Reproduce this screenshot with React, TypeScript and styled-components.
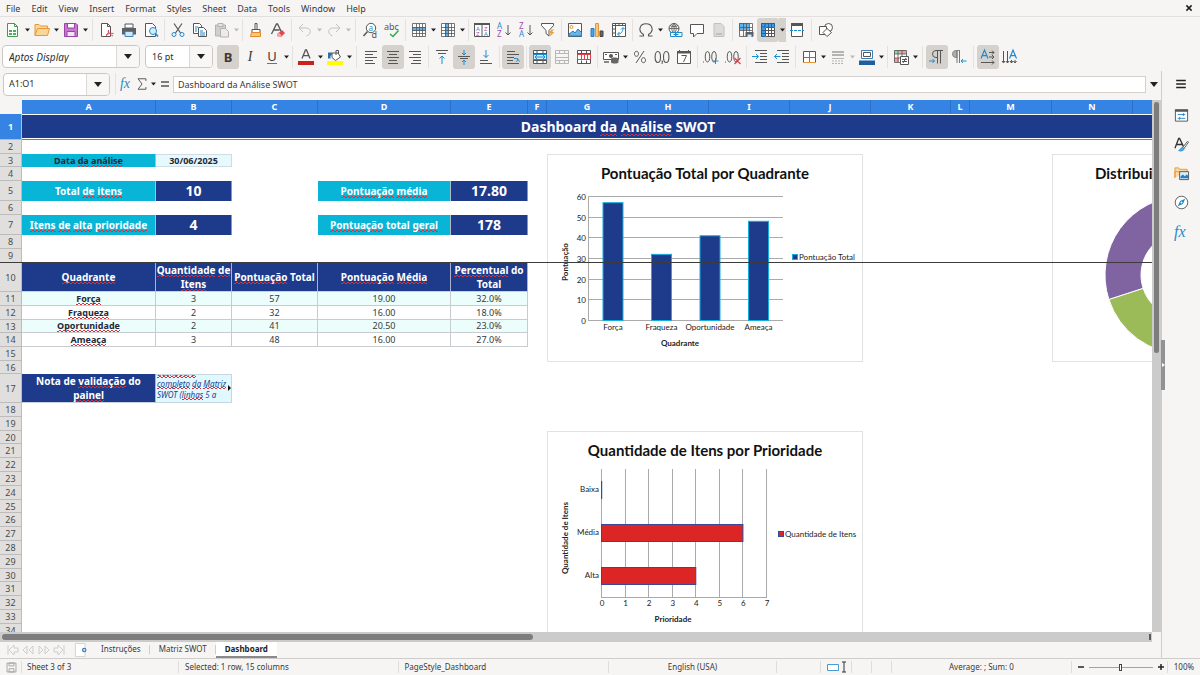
import React, { ReactNode } from "react";
import styled, { createGlobalStyle, css } from "styled-components";

const INK = "#565656";
const BLUE = "#1e8bcd";
const NAVY = "#1e3a8a";
const BAR = "#f6f5f4";

const GlobalStyle = createGlobalStyle`
  *, *::before, *::after { box-sizing: border-box; }
  html, body { margin: 0; padding: 0; }
  body { background: ${BAR}; color: #3a3a3a; font-family: "Noto Sans", sans-serif; font-size: 9px; line-height: 12px; }
  button, input, select { font: inherit; color: inherit; margin: 0; padding: 0; border: 0; background: none; }
`;

/* ---------- icons ---------- */

const lines = (d: string, c = INK, w = 1) => <path d={d} stroke={c} strokeWidth={w} fill="none" />;
const letter = (x: number, y: number, t: string, c: string, size = 8) => (
  <text x={x} y={y} fill={c} fontSize={size} fontFamily="Noto Sans, sans-serif">{t}</text>
);

const icons: Record<string, ReactNode> = {
  newDoc: <><path d="M2.5 1.5h7l3 3v10h-10z" fill="#fff" stroke="#3f9b4f" /><path d="M9.5 1.5v3h3" fill="none" stroke="#3f9b4f" /><path d="M4 8h7v5H4z" fill="#4caf5c" /><path d="M4 10.5h7M7.5 8v5" stroke="#fff" /></>,
  open: <><path d="M1 13.5V2.5h4l1.500 1.500h7v3" fill="#fbd9a0" stroke="#e8973a" /><path d="M1 13.500l2.500-7h12l-2 7z" fill="#fcd696" stroke="#e8973a" /></>,
  save: <><path d="M1.500 1.500h11.500l1.500 1.500v11.500h-13z" fill="#c678cf" stroke="#9a45a6" /><path d="M4.500 1.500h7v4.500h-7z" fill="#fff" stroke="#9a45a6" /><path d="M4 9.500h8v5H4z" fill="#efe2f1" stroke="#9a45a6" /></>,
  pdf: <><path d="M2.500 1.500h6l3 3v10h-9z" fill="#fff" stroke={INK} /><path d="M8.500 1.500v3h3" fill="none" stroke={INK} /><path d="M7 14c2-2 3-4 2.500-6M7 13c2-1.500 5-2 7.500-1.500M9 9c1 2 3 4 5 5" stroke="#e0414d" fill="none" /></>,
  print: <><path d="M4 2h8v4H4z" fill="#fff" stroke={INK} /><path d="M1 6h14v6.500H1z" fill="#5a6066" /><path d="M4 9.500h8v5H4z" fill="#cfe6f7" stroke="#3d87bd" /></>,
  preview: <><path d="M2.500 1.500h7l3 3v10h-10z" fill="#fff" stroke={INK} /><circle cx="10" cy="9" r="3.500" fill="#d5ecfa" stroke={BLUE} /><path d="M12.500 11.500l2.500 3" stroke={BLUE} strokeWidth="1.500" /></>,
  cut: <><path d="M4 1.500l6.500 9.500M12 1.500L5.500 11" stroke={INK} strokeWidth="1.200" /><circle cx="4" cy="12.500" r="2" fill="none" stroke={BLUE} /><circle cx="12" cy="12.500" r="2" fill="none" stroke={BLUE} /></>,
  copy: <><path d="M1.500 1.500h6l2 2v8h-8z" fill="#fff" stroke={INK} /><path d="M6.500 5.500h5l3 3v6h-8z" fill="#fff" stroke={INK} /><path d="M3 5h3M3 7h2M3 9h2M8 9h3M8 11h5M8 13h5" stroke={BLUE} /></>,
  paste: <><path d="M1.500 3h10v11h-10z" fill="#d0cfcd" stroke="#b5b3b1" /><path d="M4 1.500h5v3H4z" fill="#e6e5e3" stroke="#b5b3b1" /><path d="M6.500 6.500h5l3 3v5.500h-8z" fill="#ecebea" stroke="#b5b3b1" /></>,
  brush: <><path d="M7 1.500h2v6H7z" fill="#fff" stroke={INK} /><path d="M4 7.500h8v3H4z" fill="#fff" stroke={INK} /><path d="M3.500 10.500h9v4h-10z" fill="#fbc77a" stroke="#e58a2b" /></>,
  clear: <><path d="M1.500 12L6.500 2h1l4 8M3.500 8h6" stroke={INK} fill="none" strokeWidth="1.300" /><path d="M7 12l5-4 3 3-4 4H8z" fill="#e0484f" /><path d="M7 12l2-1.500 2.500 3L10.500 15H8z" fill="#f5a5a8" /></>,
  undo: lines("M6 2L2 6l4 4M2 6h7.500c5 0 5 6.500 0 8", "#c4c2c0"),
  redo: lines("M10 2l4 4-4 4M14 6H6.500c-5 0-5 6.500 0 8", "#c4c2c0"),
  find: <><circle cx="9" cy="6" r="4.700" fill="#fff" stroke={INK} /><path d="M5.500 9.500L1.500 14" stroke={INK} strokeWidth="1.500" />{letter(6.5, 8.5, "a", BLUE, 8)}{letter(9.5, 15.5, "d", INK, 9)}</>,
  spell: <>{letter(0, 8, "abc", INK, 9)}<path d="M6 12l3 2.500 5.500-6" stroke="#35a853" strokeWidth="1.500" fill="none" /></>,
  row: <><path d="M1.500 2.500h13v11h-13z" fill="#fff" /><path d="M1 5h14v4H1z" fill="#5fb2ea" />{lines("M1.500 1.500h13v13h-13zM1.500 5.500h13M1.500 8.500h13M1.500 11.500h13M5.500 1.500v13M8.500 1.500v13M11.500 1.500v13", INK, 0.8)}</>,
  col: <><path d="M1.500 1.500h13v13h-13z" fill="#fff" /><path d="M5 1h4v14H5z" fill="#5fb2ea" />{lines("M1.500 1.500h13v13h-13zM1.500 5.500h13M1.500 8.500h13M1.500 11.500h13M5.500 1.500v13M8.500 1.500v13M11.500 1.500v13", INK, 0.8)}</>,
  sort: <><path d="M.5 1.500h15v13H.5z" fill="#fff" stroke={INK} /><path d="M0 1h16v2H0z" fill={INK} /><path d="M8 3v12" stroke={INK} />{letter(2, 8.5, "A", BLUE, 6)}{letter(2, 14, "Z", "#a24bb5", 6)}{letter(10, 8.5, "Z", "#a24bb5", 6)}{letter(10, 14, "A", BLUE, 6)}</>,
  sortAsc: <>{letter(1, 7, "A", BLUE, 8)}{letter(1, 15, "Z", "#a24bb5", 8)}{lines("M12 3v10M9.500 10.500l2.500 2.500 2.500-2.500")}</>,
  sortDesc: <>{letter(1, 7, "Z", "#a24bb5", 8)}{letter(1, 15, "A", BLUE, 8)}{lines("M12 3v10M9.500 10.500l2.500 2.500 2.500-2.500")}</>,
  filter: <><path d="M1.500 1.500h12v2L9 8.500V14l-3-2.500v-3L1.500 3.500z" fill="#fff" stroke={INK} /><path d="M11.500 7.500l-3 4h2.500L9.500 15l5-5h-2.500l2-2.500z" fill="#f0a03c" /></>,
  image: <><path d="M1.500 1.500h13v13h-13z" fill="#fff" stroke={INK} /><circle cx="4.500" cy="5" r="1.500" fill="none" stroke="#e8973a" /><path d="M2 14v-2l4-3 2 2 3-4 3.500 3.500V14z" fill="#6db4e4" stroke="#2a7fbe" /></>,
  chart: <><path d="M2 6.500h3v8H2z" fill="#4ea4dc" stroke="#2a7fbe" /><path d="M6.500 1.500h3v13h-3z" fill="#fbc77a" stroke="#e0973f" /><path d="M11 9h3v5.500h-3z" fill="#666" stroke="#444" /></>,
  pivot: <><path d="M1.500 1.500h13v13h-13z" fill="#fff" stroke={INK} /><path d="M1.500 3.500h13M4.500 1.500v13M8 1.500v2M11.500 1.500v2M1.500 7h3M1.500 11h3" stroke={INK} /><path d="M7 12c3 0 5-2 5-6M10 7.500L12 5.500l2 2M8.500 10l-2 2 2 2" stroke={BLUE} fill="none" /></>,
  omega: lines("M1.500 14h4v-1.500C-.5 9 1.500 1.800 8 1.800S16.500 9 10.500 12.500V14h4", INK, 1.1),
  link: <><circle cx="7" cy="6.500" r="5" fill="none" stroke={INK} /><path d="M2 6.500h10M7 1.500v10M3 3.500c2 1.500 6 1.500 8 0M7 1.500c-3 3-3 7 0 10M7 1.500c3 3 3 7 0 10" fill="none" stroke={INK} strokeWidth=".8" /><path d="M3.500 10.500h5v4h-5zM9 10.500h6v4H9zM6.500 12.500h5" fill={BAR} stroke={BLUE} /></>,
  comment: <path d="M1.500 2.500h13v9H8l-3.500 3.500V11.500h-3z" fill="#fff" stroke={INK} />,
  header: <><path d="M3 1.500h7l3 3v10H3z" fill="#dddbd9" stroke="#c2c0be" /><path d="M5 11h6v2H5z" fill="#c2c0be" /></>,
  printRange: <><path d="M1.500 1.500h13v10h-13z" fill="#fff" /><path d="M1 1h10v7H1z" fill="#5fb2ea" />{lines("M1.500 1.500h13v13h-13zM1.500 5.500h13M1.500 8.500h13M5.500 1.500v13M8.500 1.500v13M11.500 1.500v8", INK, 0.8)}<path d="M7.500 10h8v4.500h-8z" fill="#5a6066" /><path d="M9.500 12.500h4v2.500h-4z" fill="#cfe6f7" /></>,
  freeze: <><path d="M1.500 1.500h13v13h-13z" fill="#fff" /><path d="M1 1h14v4H1zM1 1h4v14H1z" fill="#3e9be0" />{lines("M5.500 5.500v9h9v-9zM5.500 8.500h9M5.500 11.500h9M8.500 5v9.500M11.500 5v9.500")}<path d="M1.500 1.500h13v3.500M1.500 1.500v13H5M5 1.500V5M8.500 1.500V5M11.500 1.500V5M1.500 5H5M1.500 8.500H5M1.500 11.500H5" stroke="#1d62a5" fill="none" /></>,
  split: <><path d="M2.500 1.500h11v13h-11z" fill="#fff" stroke={INK} /><path d="M2 1h12v3H2z" fill={INK} /><path d="M1 8.500h14" stroke={BLUE} strokeDasharray="3 1" /></>,
  shapes: <><circle cx="10.500" cy="5.500" r="4" fill="#fff" stroke={INK} /><path d="M1.500 4.500h7v8h-7z" fill="#fff" stroke={INK} /><path d="M9 6.500l4.500 4-4.500 4-4-4z" fill="#fff" stroke={INK} /></>,
  fontColor: <><path d="M4 9.500L7.500 1h1L12 9.500M5.300 6.700h5.400" stroke={INK} fill="none" strokeWidth="1.300" /><path d="M0 12h16v4H0z" fill="#c9211e" /></>,
  highlight: <><path d="M5 4l6 0 2.500 4-5 3.500L5 8.500z" fill="#fff" stroke={INK} /><path d="M9 6V1.500h2.500V5" fill="none" stroke={INK} /><path d="M1 9.500V3.500h4v2L3.500 7v2.500z" fill="#2f6fa8" /><path d="M0 12h16v4H0z" fill="#ffff00" /></>,
  alignLeft: lines("M2 2.500h12M2 5.500h8M2 8.500h12M2 11.500h8M2 14.500h10"),
  alignCenter: lines("M2 2.500h12M4 5.500h8M2 8.500h12M4 11.500h8M3 14.500h10"),
  alignRight: lines("M2 2.500h12M6 5.500h8M2 8.500h12M6 11.500h8M4 14.500h10"),
  vTop: <>{lines("M2 1.500h12M4 4.500h8")}{lines("M8 15V7M5.500 9.500L8 7l2.500 2.500", BLUE)}</>,
  vMid: <>{lines("M2 7.500h12M4 9.500h8")}{lines("M8 1v5M6 4l2 2 2-2M8 16v-5M6 13l2-2 2 2", BLUE)}</>,
  vBottom: <>{lines("M2 11.500h8M2 14.500h12")}{lines("M8 1v7.500M5.500 6L8 8.500 10.500 6", BLUE)}</>,
  wrap: <>{lines("M2 2.500h8M2 5.500h12M2 8.500h7M2 11.500h6M2 14.500h12")}{lines("M9 9.500h2c2 0 2 3 0 3M12 9l2.500 3.500", BLUE)}</>,
  merge: <><path d="M1.500 1.500h13v13h-13z" fill="#fff" />{lines("M1.500 1.500h13v13h-13zM1.500 4.500h13M1.500 11.500h13M5 1.500v3M11 1.500v3M5 11.500v3M11 11.500v3")}<path d="M1.500 5.500h13v5h-13z" fill="#d3ebfa" stroke={BLUE} /><path d="M3 8h10M5 6L3 8l2 2M11 6l2 2-2 2" fill="none" stroke={BLUE} /></>,
  mergeOff: lines("M1.500 1.500h13v13h-13zM1.500 4.500h13M1.500 8.500h13M1.500 11.500h13M5.500 1.500v3M10.500 1.500v3M5.500 11.500v3M10.500 11.500v3", "#b9b7b5"),
  unmerge: <><path d="M1.500 1.500h13v13h-13z" fill="#fff" />{lines("M1.500 1.500h13v13h-13zM1.500 4.500h13M5.500 1.500v3M10.500 1.500v3M5.500 11.500v3M10.500 11.500v3")}{lines("M1.500 5.500h13v5h-13zM5.500 5v6M8.500 5v6M11.500 5v6", "#e0414d")}</>,
  currency: <><path d="M.5 3.500h15v7H.5z" fill="#fff" stroke={INK} /><circle cx="8" cy="7" r="2" fill={INK} /><path d="M2 5.500h2M12 5.500h2" stroke={INK} /><path d="M8 10c0-2 7.500-2 7.500 0v3c0 2-7.500 2-7.500 0z" fill="#666" /><path d="M1 12h5v2H1z" fill="#888" /></>,
  percent: lines("M12 2L4 14M4.500 2.300c2.700 0 2.700 5 0 5s-2.700-5 0-5zM11.500 8.700c2.700 0 2.700 5 0 5s-2.700-5 0-5z"),
  number: <>{lines("M3.800 2.500c3.600 0 3.600 11 0 11s-3.600-11 0-11zM12.200 2.500c3.600 0 3.600 11 0 11s-3.600-11 0-11z", INK, 1.1)}<path d="M7.500 12h1l-.5 3" stroke={INK} fill="none" /></>,
  date: <><path d="M1.500 2.500h13v12h-13z" fill="#fff" stroke={INK} /><path d="M1 2h14v2.500H1z" fill={INK} /><path d="M3.500 1v2M12.500 1v2" stroke={INK} /><path d="M5.500 6.500h5L7.500 13" stroke={INK} fill="none" /></>,
  addDec: <>{lines("M0 13h1M4.500 2.500c3 0 3 10.500 0 10.500s-3-10.500 0-10.500zM11 2.500c3 0 3 10.500 0 10.500s-3-10.500 0-10.500z")}{lines("M12.500 9v6M9.500 12h6", BLUE)}</>,
  delDec: <>{lines("M0 13h1M4.500 2.500c3 0 3 10.500 0 10.500s-3-10.500 0-10.500zM11 2.500c3 0 3 10.500 0 10.500s-3-10.500 0-10.500z")}{lines("M9.500 9l6 6M15.500 9l-6 6", "#e0414d", 1.2)}</>,
  indent: <>{lines("M3 1.500h12M8 4.500h7M8 7.500h7M8 10.500h7M3 13.500h12")}{lines("M0 7.500h6M4 5l2.500 2.500L4 10", BLUE)}</>,
  outdent: <>{lines("M3 1.500h12M8 4.500h7M8 7.500h7M8 10.500h7M3 13.500h12")}{lines("M6.500 7.500h-6M3 5L.5 7.500 3 10", BLUE)}</>,
  borders: <><path d="M2.500 2.500h12v11h-12z" fill="#fff" stroke={INK} /><path d="M8.500 2.500v11M2.500 8.500h12" stroke="#777" /><path d="M2 13.500h13" stroke="#e8973a" /></>,
  lineStyle: <><path d="M2 3h12M2 6h12" stroke="#b5b3b1" strokeWidth="2" /><path d="M2 9.500h12" stroke="#b5b3b1" /><path d="M2 12h12M2 14.500h12" stroke="#b5b3b1" strokeDasharray="2 1" /></>,
  borderColor: <><path d="M2.500 1.500h11v8h-11z" fill="#fff" stroke="#3c7fb8" /><path d="M4.500 3.500h7v4h-7z" fill="#fff" stroke={INK} /><path d="M0 11.500h16V16H0z" fill="#1f5f9e" /></>,
  conditional: <><path d="M1.500 1.500h12v12h-12z" fill="#fff" /><path d="M1 1h6v4H1z" fill="#9bd6a4" /><path d="M7 1h6v4H7zM1 9h5v4H1z" fill="#f0a0a0" />{lines("M1.500 1.500h12v12h-12zM1.500 5h12M1.500 9h12M5 1.500v12M9 1.500v12", INK, 0.8)}<path d="M7.500 7.500h8v8h-8z" fill="#fff" stroke={INK} /><path d="M9 10.500h5M9 12.500h5M13 9l-3 5" stroke={INK} /></>,
  ltr: <><path d="M11.500 1.500H7a3.500 3.500 0 0 0 0 7h1M8.500 1.500v13M11.500 1.500v13M10 1.500h4" fill="none" stroke={INK} /><path d="M0 12h5.500M3.500 10l2 2-2 2" fill="none" stroke={BLUE} /></>,
  rtl: <><path d="M9 1.500H5a3.500 3.500 0 0 0 0 7h1V1.500h3" fill="#b0aeac" stroke="#888" /><path d="M6 1.500V14M8.500 1.500V14" fill="none" stroke="#777" /><path d="M15.500 12H10M12 10l-2 2 2 2" fill="none" stroke={BLUE} /></>,
  textH: <><path d="M1 9.500L4.500 1l3.500 8.500M2.300 6.700h4.400" stroke={BLUE} fill="none" strokeWidth="1.200" />{lines("M9 3.500h5M12 1.500l2 2-2 2M9 8h5M12 6l2 2-2 2M1 13.500h13M12 11.500l2 2-2 2")}</>,
  textV: <><path d="M7.500 9.500L11 1l3.500 8.500M8.800 6.700h4.400" stroke={BLUE} fill="none" strokeWidth="1.200" />{lines("M1.500 2v12M0 12l1.500 2L3 12M5.500 2v12M4 12l1.500 2L7 12M9.500 11v3M8 12l1.500 2 1.500-2M13 11v3M11.500 12l1.500 2 1.500-2")}</>,
  burger: lines("M2.500 4h11M2.500 8h11M2.500 12h11", "#222", 1.6),
  props: <><path d="M1.500 2h13v12h-13z" fill="#fff" stroke={INK} /><path d="M1 1.500h14v2.500H1z" fill={INK} /><path d="M4 7h8M4 11h8M10 5.500v3M6 9.500v3" stroke={BLUE} /></>,
  styles: <><path d="M1 12L5 1.500h1L10 10M2.500 8h6" stroke="#333" fill="none" strokeWidth="1.400" /><path d="M14.500 4.500L9 11.500l1.500 1 5-7z" fill="#fff" stroke={INK} /><path d="M5 14.500c2-.5 2-3 4-3.500l2 1.500c-1 2-3 3-6 2z" fill="#58a9df" stroke={BLUE} /></>,
  gallery: <><path d="M1 12.500V2h4l1 1.500h8v3" fill="#fbd9a0" stroke="#e8973a" /><path d="M1 12.500V6h5" fill="none" stroke="#e8973a" /><path d="M6 6h9.500v8.500H6z" fill="#d9eefb" stroke={INK} /><path d="M7 13v-2l2.500-2 2 2 2-2 1.500 1.500V13z" fill="#2a7fbe" /></>,
  navigator: <><circle cx="8" cy="8" r="6.700" fill="#fff" stroke={INK} /><path d="M12 4l-2.500 5.500L4 12l2.500-5.500z" fill={BLUE} /><circle cx="8" cy="8" r="1" fill="#fff" /></>,
  fx: <text x="1" y="12.500" fill={BLUE} fontSize="16" fontStyle="italic" fontFamily="Liberation Serif, serif">fx</text>,
  sigma: lines("M12.500 4.500V2h-9L8 8l-4.500 6h9v-2.500", INK, 1.1),
  equals: lines("M4 6h8M4 10h8", INK, 1.6),
  close: lines("M5 5l6 6M11 5l-6 6", "#222", 1.8),
  docSave: <><path d="M2.500 2.500h11v11h-11z" fill="none" stroke="#999" /><path d="M5 2.500h6V6H5zM5 9.500h6v4H5z" fill="none" stroke="#999" /></>,
  addSheet: <><path d="M.5.5h11v15H.5z" fill="#fff" stroke="#d0cecc" /><circle cx="10.500" cy="8" r="2.500" fill="#1d6bc0" /><path d="M10.500 6.500v3M9 8h3" stroke="#fff" /></>,
};

const Svg = styled.svg`display: block; flex: none; overflow: visible;`;
const Icon = ({ name, size = 16 }: { name: string; size?: number }) => (
  <Svg width={size} height={size} viewBox="0 0 16 16" aria-hidden="true">{icons[name]}</Svg>
);
const CaretShape = ({ big, muted }: { big?: boolean; muted?: boolean }) => (
  <Svg width={big ? 8 : 5} height={big ? 5 : 4} viewBox="0 0 8 5" aria-hidden="true">
    <path d="M0 0h8L4 5z" fill={muted ? "#bbb" : "#222"} />
  </Svg>
);

/* ---------- shell ---------- */

const Page = styled.div`display: flex; flex-direction: column; height: 100vh; overflow: hidden; background: ${BAR};`;

const MenuBar = styled.nav`
  display: flex; align-items: center; height: 17px; padding: 0 4px 0 1px; gap: 1px;
  border-bottom: 1px solid #e2e0de; flex: none;
`;
const MenuItem = styled.button`padding: 1px 5px 0; line-height: 15px; white-space: nowrap;`;
const CloseButton = styled.button`margin-left: auto; width: 14px; height: 14px; display: grid; place-items: center;`;

const Toolbar = styled.div`display: flex; align-items: center; height: 27px; flex: none; padding: 0 0 2px 2px;`;
const Tool = styled.button<{ $on?: boolean }>`
  width: 22px; height: 24px; flex: none; display: grid; place-items: center; border-radius: 3px;
  background: ${(p) => (p.$on ? "#d5d1cd" : "transparent")};
`;
const Caret = styled.button<{ $on?: boolean }>`
  width: 7px; height: 24px; flex: none; display: grid; place-items: center;
  background: ${(p) => (p.$on ? "#d5d1cd" : "transparent")};
`;
const Sep = styled.span<{ $wide?: boolean }>`
  width: ${(p) => (p.$wide ? 7 : 5)}px; height: 22px; flex: none; display: flex; justify-content: center;
  &::after { content: ""; width: 1px; background: #e4e2e0; }
`;
const Glyph = styled.span<{ $kind: "b" | "i" | "u" }>`
  font-size: 13px; line-height: 16px; color: #3a3a3a;
  ${(p) => p.$kind === "b" && css`font-weight: 700;`}
  ${(p) => p.$kind === "i" && css`font-style: italic; font-family: "Liberation Serif", serif; font-size: 14px;`}
  ${(p) => p.$kind === "u" && css`border-bottom: 1px solid ${BLUE}; line-height: 14px;`}
`;

const Combo = styled.span<{ $w: number; $gap: number }>`
  display: flex; width: ${(p) => p.$w}px; height: 23px; margin-right: ${(p) => p.$gap}px; flex: none; position: relative;
  background: #fff; border: 1px solid #cdc7c2; border-radius: 4px; overflow: hidden;
`;
const ComboSelect = styled.select<{ $italic?: boolean }>`
  appearance: none; flex: 1; min-width: 0; padding-left: 6px; outline: 0; color: #2e2e2e;
  font-size: ${(p) => (p.$italic ? 10 : 9)}px;
  font-style: ${(p) => (p.$italic ? "italic" : "normal")};
`;
const ComboInput = styled.input`flex: 1; min-width: 0; padding-left: 5px; outline: 0; color: #2e2e2e;`;
const ComboArrow = styled.span`
  width: 23px; display: grid; place-items: center; background: #f8f7f6; border-left: 1px solid #dcd8d5; pointer-events: none;
`;

type ToolSpec = string | { n: string; on?: boolean; caret?: boolean; muted?: boolean; label?: ReactNode };
const Tools = ({ items }: { items: ToolSpec[] }) => (
  <>
    {items.map((it, i) => {
      if (it === "|") return <Sep key={i} />;
      if (it === "||") return <Sep key={i} $wide />;
      const t = typeof it === "string" ? { n: it } : it;
      const { n, on, caret, muted, label } = t as Exclude<ToolSpec, string>;
      return (
        <React.Fragment key={i}>
          <Tool $on={on} aria-label={n} aria-pressed={on}>{label ?? <Icon name={n} />}</Tool>
          {caret && <Caret $on={on} aria-label={`${n} options`}><CaretShape muted={muted} /></Caret>}
        </React.Fragment>
      );
    })}
  </>
);

const standardTools: ToolSpec[] = [
  { n: "newDoc", caret: true }, { n: "open", caret: true }, { n: "save", caret: true }, "||",
  "pdf", "print", "preview", "|",
  "cut", "copy", { n: "paste", caret: true, muted: true }, "|",
  "brush", "clear", "|",
  { n: "undo", caret: true, muted: true }, { n: "redo", caret: true, muted: true }, "||",
  "find", "spell", "|",
  { n: "row", caret: true }, { n: "col", caret: true }, "|",
  "sort", "sortAsc", "sortDesc", "filter", "|",
  "image", "chart", "pivot", "|",
  { n: "omega", caret: true }, "link", "comment", "header", "|",
  "printRange", { n: "freeze", on: true, caret: true }, "split", "||", "shapes",
];
const formatTools: ToolSpec[] = [
  { n: "bold", on: true, label: <Glyph $kind="b">B</Glyph> },
  { n: "italic", label: <Glyph $kind="i">I</Glyph> },
  { n: "underline", caret: true, label: <Glyph $kind="u">U</Glyph> }, "|",
  { n: "fontColor", caret: true }, { n: "highlight", caret: true }, "||",
  "alignLeft", { n: "alignCenter", on: true }, "alignRight", "|",
  "vTop", { n: "vMid", on: true }, "vBottom", "|",
  { n: "wrap", on: true }, "|",
  { n: "merge", on: true }, "mergeOff", "unmerge", "|",
  { n: "currency", caret: true }, "percent", "number", "date", "|",
  "addDec", "delDec", "|", "indent", "outdent", "|",
  { n: "borders", caret: true }, { n: "lineStyle", caret: true, muted: true }, { n: "borderColor", caret: true }, "|",
  { n: "conditional", caret: true }, "||",
  { n: "ltr", on: true }, "rtl", "||", { n: "textH", on: true }, "textV",
];

const Body = styled.div`display: flex; flex: 1; min-height: 0;`;
const Main = styled.main`display: flex; flex-direction: column; flex: 1; min-width: 0; border-right: 1px solid #cfcdcb;`;
const FormulaBar = styled.div`display: flex; align-items: center; height: 26px; margin-bottom: 3px; padding-left: 3px; flex: none;`;
const SmallTool = styled.button`width: 16px; height: 22px; flex: none; display: grid; place-items: center;`;
const FormulaInput = styled.input`
  flex: 1; min-width: 0; height: 17px; padding: 0 4px; background: #fff; border: 1px solid #d4d0cd; outline: 0;
`;
const ExpandButton = styled.button`width: 15px; height: 17px; display: grid; place-items: center; flex: none;`;

const Sidebar = styled.aside`
  width: 38px; flex: none; display: flex; flex-direction: column; align-items: center; position: relative;
`;
const SideButton = styled.button<{ $first?: boolean }>`
  width: 28px; height: ${(p) => (p.$first ? 26 : 29)}px; margin-bottom: ${(p) => (p.$first ? 4 : 0)}px;
  display: grid; place-items: center;
`;
const SideHandle = styled.button`
  position: absolute; left: -1px; top: 50%; transform: translateY(-50%); width: 4px; height: 50px;
  background: #929292; display: grid; place-items: center;
`;

/* ---------- sheet ---------- */

const SheetRow = styled.div`display: flex; flex: 1; min-height: 0;`;
const SheetView = styled.div`position: relative; flex: 1; min-width: 0; overflow: hidden; background: #fff;`;
const Grid = styled.table`
  table-layout: fixed; border-collapse: separate; border-spacing: 0; width: 1214px; line-height: 12px;
`;
const ColHead = styled.th`
  height: 14px; padding: 0; background: #3584e4; color: #fff; border-right: 1px solid #2a70c8; font-weight: 700; line-height: 12px;
`;
const Corner = styled.th`padding: 0; background: ${BAR};`;
const Tr = styled.tr<{ $h: number }>`height: ${(p) => p.$h}px;`;
const RowHead = styled.th<{ $on?: boolean }>`
  padding: 0; font-weight: ${(p) => (p.$on ? 700 : 400)}; color: ${(p) => (p.$on ? "#fff" : "#4a4a4a")};
  background: ${(p) => (p.$on ? "#3584e4" : "#e1dfdd")};
  border-right: 1px solid #bebcba; border-bottom: 1px solid #bebcba; line-height: 11px;
`;

type Kind = "blank" | "title" | "label" | "labelDark" | "date" | "kpi" | "head" | "name" | "value" | "note";
const kinds: Record<Kind, ReturnType<typeof css>> = {
  blank: css``,
  title: css`background: ${NAVY}; color: #fff; font-weight: 700; font-size: 14px; line-height: 18px; border-top: 1px solid #fff; border-bottom: 1px solid #77758a; box-shadow: inset 0 -1px #fff;`,
  label: css`background: #08b5d6; color: #fff; font-weight: 700; font-size: 10px; border-right: 1px solid #a9bfca;`,
  labelDark: css`background: #08b5d6; color: #1f2937; font-weight: 700; border-right: 1px solid #a9bfca;`,
  date: css`background: #e6f9fe; color: #1f2937; font-weight: 700; line-height: 11px; border: solid #cfdde2; border-width: 1px 1px 1px 0;`,
  kpi: css`background: ${NAVY}; color: #fff; font-weight: 700; font-size: 14px; line-height: 16px; border-right: 1px solid #8796bd;`,
  head: css`background: ${NAVY}; color: #fff; font-weight: 700; font-size: 10px; line-height: 14px; border-right: 1px solid #a9b3cf; border-bottom: 1px solid #c9d2da;`,
  name: css`color: #1f2937; font-weight: 700; border: solid #c8cccf; border-width: 0 1px 1px 0;`,
  value: css`color: #333b45; border: solid #c8cccf; border-width: 0 1px 1px 0;`,
  note: css`background: #e0f8ff; color: ${NAVY}; font-style: italic; font-size: 8px; text-align: left; border: solid #c4d8de; border-width: 1px 1px 1px 0;`,
};
const Td = styled.td<{ $kind: Kind; $tint?: boolean }>`
  padding: 0; text-align: center; white-space: nowrap;
  ${(p) => kinds[p.$kind]}
  ${(p) => p.$tint && css`background: #ecfefc;`}
`;
/* Two offset rows of dashes make the tight zigzag under a misspelt word. */
const Misspelt = styled.span`
  background-image: linear-gradient(90deg, #d8333a 50%, transparent 50%), linear-gradient(90deg, #d8333a 50%, transparent 50%);
  background-size: 4px 1px;
  background-repeat: repeat-x;
  background-position: 0 100%, 2px calc(100% - 1px);
`;
const NoteClip = styled.div`
  height: 27px; overflow: hidden; padding: 0 0 2px 1px; line-height: 11px; position: relative;
  display: flex; flex-direction: column; justify-content: flex-end;
`;
const NoteArrow = styled.span`position: absolute; right: 0; top: 10px;`;

const M = Misspelt;
type Cell = { k: Kind; v: ReactNode; tint?: boolean };
type Row = { h: number; cells?: Record<string, Cell> };

const dataRow = (h: number, tint: boolean, vals: string[]): Row => ({
  h,
  cells: Object.fromEntries(
    vals.map((v, i) => ["ABCDE"[i], { k: (i ? "value" : "name") as Kind, v: i ? v : <M>{v}</M>, tint }])
  ),
});

const rows: Row[] = [
  { h: 26 }, { h: 14 },
  { h: 13, cells: { A: { k: "labelDark", v: <>Data <M>da</M> <M>análise</M></> }, B: { k: "date", v: "30/06/2025" } } },
  { h: 14 },
  { h: 20, cells: {
    A: { k: "label", v: <>Total <M>de</M> <M>itens</M></> }, B: { k: "kpi", v: "10" },
    D: { k: "label", v: <><M>Pontuação</M> <M>média</M></> }, E: { k: "kpi", v: "17.80" } } },
  { h: 14 },
  { h: 20, cells: {
    A: { k: "label", v: <><M>Itens</M> <M>de</M> <M>alta</M> <M>prioridade</M></> }, B: { k: "kpi", v: "4" },
    D: { k: "label", v: <><M>Pontuação</M> total <M>geral</M></> }, E: { k: "kpi", v: "178" } } },
  { h: 14 }, { h: 14 },
  { h: 28, cells: {
    A: { k: "head", v: <M>Quadrante</M> }, B: { k: "head", v: <><M>Quantidade</M> <M>de</M><br /><M>Itens</M></> },
    C: { k: "head", v: <><M>Pontuação</M> Total</> }, D: { k: "head", v: <><M>Pontuação</M> <M>Média</M></> },
    E: { k: "head", v: <><M>Percentual</M> do<br />Total</> } } },
  dataRow(14, true, ["Força", "3", "57", "19.00", "32.0%"]),
  dataRow(14, false, ["Fraqueza", "2", "32", "16.00", "18.0%"]),
  dataRow(13, true, ["Oportunidade", "2", "41", "20.50", "23.0%"]),
  dataRow(14, false, ["Ameaça", "3", "48", "16.00", "27.0%"]),
  { h: 14 }, { h: 13 },
  { h: 29, cells: {
    A: { k: "head", v: <>Nota de <M>validação</M> do<br /><M>painel</M></> },
    B: { k: "note", v: (
      <NoteClip>
        <span><M>dashboard</M></span>
        <span><M>completo</M> <M>da</M> <M>Matriz</M></span>
        <span>SWOT (<M>linhas</M> 5 a</span>
        <NoteArrow><Svg width="3" height="6" viewBox="0 0 3 6"><path d="M0 0l3 3-3 3z" fill="#111" /></Svg></NoteArrow>
      </NoteClip>) } } },
  ...[14, 14, 13, 14, 14, 14, 14, 13, 14, 14, 14, 14, 13, 14, 14, 14, 14].map((h) => ({ h })),
];
const columns: [string, number][] = [
  ["A", 134], ["B", 76], ["C", 86], ["D", 133], ["E", 77], ["F", 19], ["G", 81], ["H", 81],
  ["I", 81], ["J", 81], ["K", 80], ["L", 19], ["M", 82], ["N", 81], ["O", 81],
];
const Col = styled.col<{ $w: number }>`width: ${(p) => p.$w}px;`;

const FreezeLine = styled.div`position: absolute; left: 0; right: 0; top: 162px; height: 1px; background: #3c3c3c;`;
const ChartFrame = styled.figure<{ $x: number; $y: number }>`
  position: absolute; left: ${(p) => p.$x}px; top: ${(p) => p.$y}px; margin: 0;
  width: 316px; height: 208px; background: #fff; border: 1px solid #e2e2e2;
`;
const ChartText = styled.text<{ $role: "title" | "axis" | "tick" }>`
  font-family: Lato, sans-serif; fill: ${(p) => (p.$role === "title" ? "#111" : "#222")};
  font-size: ${(p) => (p.$role === "title" ? 15 : 8)}px;
  font-weight: ${(p) => (p.$role === "tick" ? 400 : 700)};
`;

const ColumnChart = () => {
  const data: [string, number][] = [["Força", 57], ["Fraqueza", 32], ["Oportunidade", 41], ["Ameaça", 48]];
  const y = (v: number) => 166 - (v * 124) / 60;
  return (
    <Svg width="314" height="206" role="img" aria-label="Pontuação Total por Quadrante">
      <ChartText $role="title" x="157" y="24" textAnchor="middle">Pontuação Total por Quadrante</ChartText>
      {[0, 10, 20, 30, 40, 50, 60].map((v) => (
        <g key={v}>
          <path d={`M40 ${Math.round(y(v)) - 0.5}H235`} stroke="#aaa" />
          <ChartText $role="tick" x="38" y={y(v) + 3} textAnchor="end">{v}</ChartText>
        </g>
      ))}
      <path d="M40.500 42V166" stroke="#aaa" />
      {data.map(([n, v], i) => (
        <g key={n}>
          <rect x={55 + i * 48.5} y={y(v) - 0.5} width="20" height={166 - y(v)} fill={NAVY} stroke="#12b0dc" />
          <ChartText $role="tick" x={65 + i * 48.5} y="175" textAnchor="middle">{n}</ChartText>
        </g>
      ))}
      <ChartText $role="axis" x="132" y="191" textAnchor="middle">Quadrante</ChartText>
      <ChartText $role="axis" transform="translate(20 107) rotate(-90)" textAnchor="middle">Pontuação</ChartText>
      <rect x="244.500" y="99.500" width="5" height="5" fill={NAVY} stroke="#12b0dc" />
      <ChartText $role="tick" x="251" y="105">Pontuação Total</ChartText>
    </Svg>
  );
};

const BarChart = () => {
  const data: [string, number, number][] = [["Baixa", 0, 50], ["Média", 6, 93], ["Alta", 4, 136]];
  const x = (v: number) => 53 + (v * 165) / 7;
  return (
    <Svg width="314" height="206" role="img" aria-label="Quantidade de Itens por Prioridade">
      <ChartText $role="title" x="157" y="24" textAnchor="middle">Quantidade de Itens por Prioridade</ChartText>
      {[0, 1, 2, 3, 4, 5, 6, 7].map((v) => (
        <g key={v}>
          <path d={`M${Math.round(x(v)) + 0.5} 37V165`} stroke="#aaa" />
          <ChartText $role="tick" x={x(v) + 1} y="174" textAnchor="middle">{v}</ChartText>
        </g>
      ))}
      <path d="M53 165.500H219" stroke="#aaa" />
      {data.map(([n, v, mid]) => (
        <g key={n}>
          <rect x="53.500" y={mid - 0.5} width={Math.max(x(v) - 53, 0.2)} height="17" fill="#dc2626" stroke="#3b479a" />
          <ChartText $role="tick" x="51" y={mid + 10} textAnchor="end">{n}</ChartText>
        </g>
      ))}
      <ChartText $role="axis" x="125" y="190" textAnchor="middle">Prioridade</ChartText>
      <ChartText $role="axis" transform="translate(20 106) rotate(-90)" textAnchor="middle">Quantidade de Itens</ChartText>
      <rect x="230.500" y="99.500" width="5" height="5" fill="#dc2626" stroke="#3b479a" />
      <ChartText $role="tick" x="237" y="105">Quantidade de Itens</ChartText>
    </Svg>
  );
};

const DonutChart = () => {
  const cx = 131, cy = 120, R = 79, r = 43;
  const parts: [number, number, string][] = [[0, 0.3, "#4f81bd"], [0.3, 0.5, "#c0504d"], [0.5, 0.7, "#9bbb59"], [0.7, 1, "#8064a2"]];
  const pt = (f: number, rad: number) => `${cx + rad * Math.sin(f * 2 * Math.PI)} ${cy - rad * Math.cos(f * 2 * Math.PI)}`;
  return (
    <Svg width="314" height="206" role="img" aria-label="Distribuição">
      <ChartText $role="title" x="42" y="24">Distribuição de Itens</ChartText>
      {parts.map(([a, b, c]) => (
        <path key={c} fill={c} stroke="#fff" d={`M${pt(a, R)}A${R} ${R} 0 0 1 ${pt(b, R)}L${pt(b, r)}A${r} ${r} 0 0 0 ${pt(a, r)}Z`} />
      ))}
    </Svg>
  );
};

/* ---------- scrollbars, tabs, status ---------- */

const VScroll = styled.div`width: 9px; flex: none; background: #cbcbcb; padding: 2px;`;
const VThumb = styled.div`height: 47.5%; border-radius: 3px; background: #7d7d7d;`;
const HScroll = styled.div`
  height: 10px; flex: none; background: #cbcbcb; padding: 2px 1px 2px 2px; margin-right: 9px;
  display: flex; justify-content: space-between;
`;
const HThumb = styled.div`width: 46.2%; border-radius: 3px; background: #7d7d7d;`;
const HEnd = styled.div`width: 2px; background: #5c5c5c;`;

const TabBar = styled.div`display: flex; height: 16px; flex: none; padding-left: 6px; font-size: 8px;`;
const NavButtons = styled.div`display: flex; align-items: center; width: 68px;`;
const NavButton = styled.button`width: 15px; height: 14px; display: grid; place-items: center;`;
const AddSheet = styled.button`width: 16px; display: grid; place-items: center; overflow: hidden;`;
const TabList = styled.div`display: flex; margin-left: 2px;`;
const Tab = styled.button<{ $on?: boolean }>`
  padding: 0 9px; line-height: 14px; border-bottom: 2px solid transparent; position: relative; white-space: nowrap;
  ${(p) => p.$on
    ? css`background: #fff; font-weight: 700; color: #222; border-bottom-color: #8a8a8a;`
    : css`&::after { content: ""; position: absolute; right: 0; top: 3px; height: 9px; width: 1px; background: #d0cecc; }`}
`;

const StatusBar = styled.footer`
  display: flex; height: 17px; flex: none; border-top: 1px solid #cfcdcb; align-items: center; font-size: 8px;
`;
const StatusCell = styled.div<{ $w?: number; $grow?: number; $center?: boolean; $pad?: number }>`
  height: 12px; display: flex; align-items: center; white-space: nowrap;
  flex: ${(p) => (p.$grow ? `${p.$grow} 0 0` : "none")};
  ${(p) => p.$w && css`width: ${p.$w}px;`}
  justify-content: ${(p) => (p.$center ? "center" : "flex-start")};
  padding-left: ${(p) => p.$pad ?? 0}px;
  border-right: 1px solid #e0dedc;
  &:last-child { border-right: 0; }
`;
const ZoomButton = styled.button`width: 12px; height: 12px; display: grid; place-items: center;`;
const ZoomSlider = styled.input`
  appearance: none; width: 64px; height: 10px; margin: 0 2px; outline: 0;
  &::-webkit-slider-runnable-track { height: 1px; background: #a5a3a1; }
  &::-webkit-slider-thumb { appearance: none; width: 3px; height: 7px; margin-top: -3px; background: #fff; border: 1px solid #444; }
`;

const navShapes = ["M1 1v10M7 1L2 6l5 5V8h4V4H7z", "M5 2L1 6l4 4zM11 2L7 6l4 4z", "M2 2l4 4-4 4zM8 2l4 4-4 4z", "M12 1v10M6 1l5 5-5 5V8H2V4h4z"];

export default function App() {
  return (
    <Page>
      <GlobalStyle />
      <MenuBar>
        {["File", "Edit", "View", "Insert", "Format", "Styles", "Sheet", "Data", "Tools", "Window", "Help"].map((m) => (
          <MenuItem key={m}>{m}</MenuItem>
        ))}
        <CloseButton aria-label="Close"><Icon name="close" size={14} /></CloseButton>
      </MenuBar>
      <Toolbar><Tools items={standardTools} /></Toolbar>
      <Toolbar>
        <Combo $w={138} $gap={5}>
          <ComboSelect $italic aria-label="Font name"><option>Aptos Display</option></ComboSelect>
          <ComboArrow><CaretShape big /></ComboArrow>
        </Combo>
        <Combo $w={68} $gap={4}>
          <ComboSelect aria-label="Font size"><option>16 pt</option></ComboSelect>
          <ComboArrow><CaretShape big /></ComboArrow>
        </Combo>
        <Tools items={formatTools} />
      </Toolbar>
      <Body>
        <Main>
          <FormulaBar>
            <Combo $w={107} $gap={3}>
              <ComboInput aria-label="Name box" defaultValue="A1:O1" />
              <ComboArrow><CaretShape big /></ComboArrow>
            </Combo>
            <Sep />
            <SmallTool aria-label="Function wizard"><Icon name="fx" size={14} /></SmallTool>
            <SmallTool aria-label="Select function"><Icon name="sigma" size={14} /></SmallTool>
            <Caret aria-label="Function options"><CaretShape /></Caret>
            <SmallTool aria-label="Formula"><Icon name="equals" /></SmallTool>
            <FormulaInput aria-label="Input line" defaultValue="Dashboard da Análise SWOT" />
            <ExpandButton aria-label="Expand formula bar"><CaretShape big /></ExpandButton>
          </FormulaBar>
          <SheetRow>
            <SheetView>
              <Grid>
                <colgroup>
                  <Col $w={22} />
                  {columns.map(([c, w]) => <Col key={c} $w={w} />)}
                </colgroup>
                <thead>
                  <tr>
                    <Corner />
                    {columns.map(([c]) => <ColHead key={c} scope="col">{c}</ColHead>)}
                  </tr>
                </thead>
                <tbody>
                  {rows.map((row, i) => (
                    <Tr key={i} $h={row.h}>
                      <RowHead scope="row" $on={i === 0}>{i + 1}</RowHead>
                      {i === 0 ? (
                        <Td $kind="title" colSpan={15}>Dashboard <M>da</M> <M>Análise</M> SWOT</Td>
                      ) : (
                        columns.map(([c]) => {
                          const cell = row.cells?.[c];
                          return <Td key={c} $kind={cell?.k ?? "blank"} $tint={cell?.tint}>{cell?.v}</Td>;
                        })
                      )}
                    </Tr>
                  ))}
                </tbody>
              </Grid>
              <ChartFrame $x={547} $y={54}><ColumnChart /></ChartFrame>
              <ChartFrame $x={1052} $y={54}><DonutChart /></ChartFrame>
              <ChartFrame $x={547} $y={331}><BarChart /></ChartFrame>
              <FreezeLine />
            </SheetView>
            <VScroll><VThumb /></VScroll>
          </SheetRow>
          <HScroll><HThumb /><HEnd /></HScroll>
          <TabBar>
            <NavButtons>
              {navShapes.map((d, i) => (
                <NavButton key={i} aria-label={["First sheet", "Previous sheet", "Next sheet", "Last sheet"][i]}>
                  <Svg width="13" height="12" viewBox="0 0 13 12"><path d={d} fill="none" stroke="#cfcdcb" /></Svg>
                </NavButton>
              ))}
            </NavButtons>
            <AddSheet aria-label="Add sheet"><Icon name="addSheet" size={14} /></AddSheet>
            <TabList role="tablist">
              <Tab role="tab">Instruções</Tab>
              <Tab role="tab">Matriz SWOT</Tab>
              <Tab role="tab" $on aria-selected>Dashboard</Tab>
            </TabList>
          </TabBar>
        </Main>
        <Sidebar>
          <SideButton $first aria-label="Sidebar settings"><Icon name="burger" size={14} /></SideButton>
          {["props", "styles", "gallery", "navigator", "fx"].map((n) => (
            <SideButton key={n} aria-label={n}><Icon name={n} size={n === "fx" ? 16 : 15} /></SideButton>
          ))}
          <SideHandle aria-label="Hide sidebar"><Svg width="3" height="4" viewBox="0 0 3 4"><path d="M0 0l3 2-3 2z" fill="#fff" /></Svg></SideHandle>
        </Sidebar>
      </Body>
      <StatusBar>
        <StatusCell $w={22} $pad={5}><Icon name="docSave" size={13} /></StatusCell>
        <StatusCell $w={157} $pad={5}>Sheet 3 of 3</StatusCell>
        <StatusCell $grow={217} $pad={6}>Selected: 1 row, 15 columns</StatusCell>
        <StatusCell $grow={208} $pad={6}>PageStyle_Dashboard</StatusCell>
        <StatusCell $grow={170} $center>English (USA)</StatusCell>
        <StatusCell $w={44} />
        <StatusCell $w={31} $pad={6}>
          <Svg width="22" height="12" viewBox="0 0 22 12"><path d="M.5 3.500h11v6H.5z" fill="#fff" stroke="#4a9bd4" /><path d="M15 1h4M15 11h4M17 1v10" stroke="#333" /></Svg>
        </StatusCell>
        <StatusCell $w={20} /><StatusCell $w={20} />
        <StatusCell $grow={183} $center>Average: ; Sum: 0</StatusCell>
        <StatusCell $w={96} $pad={3}>
          <ZoomButton aria-label="Zoom out"><Svg width="8" height="8" viewBox="0 0 8 8"><path d="M1 4h6" stroke="#222" strokeWidth="1.500" /></Svg></ZoomButton>
          <ZoomSlider type="range" aria-label="Zoom" defaultValue={50} />
          <ZoomButton aria-label="Zoom in"><Svg width="8" height="8" viewBox="0 0 8 8"><path d="M1 4h6M4 1v6" stroke="#222" strokeWidth="1.500" /></Svg></ZoomButton>
        </StatusCell>
        <StatusCell $w={32} $center>100%</StatusCell>
      </StatusBar>
    </Page>
  );
}
